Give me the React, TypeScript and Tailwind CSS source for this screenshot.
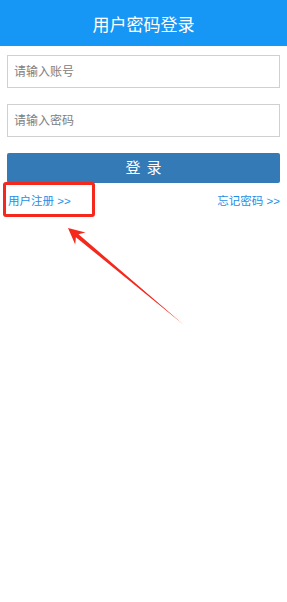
import React from "react";

export default function App() {
  return (
    <div
      className="relative w-[287px] h-[602px] bg-white overflow-hidden"
      style={{ fontFamily: '"Liberation Sans", "Noto Sans CJK SC", sans-serif' }}
    >
      <div className="h-[46px] bg-[#1697f5] flex items-center justify-center pt-[4px]">
        <span className="text-white text-[17px] leading-none">用户密码登录</span>
      </div>
      <div className="px-[7px] flex flex-col">
        <input
          className="mt-[9px] h-[33px] border border-[#d0d0d0] px-[6px] text-[12px] outline-none placeholder:text-[#808080]"
          placeholder="请输入账号"
        />
        <input
          className="mt-[16px] h-[33px] border border-[#d0d0d0] px-[6px] text-[12px] outline-none placeholder:text-[#808080]"
          placeholder="请输入密码"
        />
        <button className="mt-[16px] h-[30px] bg-[#337ab7] rounded-[2px] text-white text-[15px] tracking-[6px] flex items-center justify-center pl-[6px]">
          登录
        </button>
        <div className="mt-[11px] flex justify-between items-center text-[11.5px] leading-[14px] text-[#1e8ee6]">
          <span className="pl-[1px]">用户注册 &gt;&gt;</span>
          <span>忘记密码 &gt;&gt;</span>
        </div>
      </div>
      <div className="absolute left-[3px] top-[182px] w-[92px] h-[35px] border-[3px] border-[#f4281d] rounded-[3px]" />
      <svg className="absolute left-0 top-0" width="287" height="602" viewBox="0 0 287 602">
        <polygon
          points="68,228 85.5,232.5 78.5,234.2 184,325 75.9,237.2 75.2,244.5"
          fill="#f4281d"
        />
      </svg>
    </div>
  );
}
